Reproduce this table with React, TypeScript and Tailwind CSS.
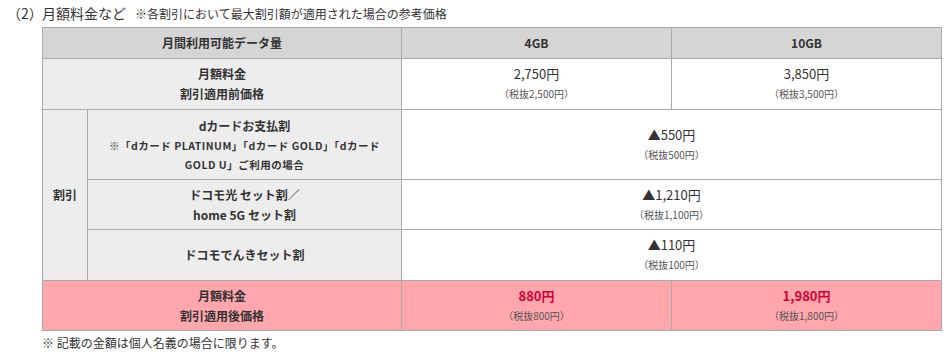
import React from "react";

const font = { fontFamily: '"Noto Sans CJK JP", "Noto Sans", sans-serif' };

function Price({ main, sub, red }: { main: string; sub: string; red?: boolean }) {
  return (
    <div className="flex flex-col items-center">
      <span className={red ? "text-[13px] leading-[20px] font-bold text-[#d50037]" : "text-[13px] leading-[20px] text-[#333]"}>{main}</span>
      <span className="text-[10px] leading-[20px] text-[#555]">{sub}</span>
    </div>
  );
}

export default function App() {
  const b = "border border-[#aaaaaa]";
  return (
    <div className="w-[948px] h-[357px] bg-white text-[#333]" style={font}>
      <div className="flex items-baseline h-[27px] pt-[3px]">
        <span className="ml-[7px] text-[14px] w-[35px]">（2）</span>
        <span className="text-[14px]">月額料金など</span>
        <span className="ml-[9px] text-[12px]">※各割引において最大割引額が適用された場合の参考価格</span>
      </div>
      <table className="ml-[42px] w-[900px] table-fixed border-collapse text-center">
        <colgroup>
          <col className="w-[45px]" />
          <col className="w-[314px]" />
          <col className="w-[270px]" />
          <col className="w-[270px]" />
        </colgroup>
        <tbody>
          <tr className="h-[31px] bg-[#d5d5d5]">
            <th colSpan={2} className={`${b} text-[12px] font-bold`}>月間利用可能データ量</th>
            <th className={`${b} text-[12px] font-bold`}>4GB</th>
            <th className={`${b} text-[12px] font-bold`}>10GB</th>
          </tr>
          <tr className="h-[51px]">
            <th colSpan={2} className={`${b} bg-[#ededed] text-[12px] leading-[20px] font-bold`}>月額料金<br />割引適用前価格</th>
            <td className={b}><Price main="2,750円" sub="（税抜2,500円）" /></td>
            <td className={b}><Price main="3,850円" sub="（税抜3,500円）" /></td>
          </tr>
          <tr className="h-[70px]">
            <th rowSpan={3} className={`${b} bg-[#ededed] text-[12px] font-bold`}>割引</th>
            <th className={`${b} bg-[#ededed] font-bold`}>
              <div className="text-[12px] leading-[20px]">dカードお支払割</div>
              <div className="text-[10.5px] leading-[19px] tracking-[0.5px] whitespace-nowrap">※「dカード PLATINUM」「dカード GOLD」「dカード<br />GOLD U」ご利用の場合</div>
            </th>
            <td colSpan={2} className={b}><Price main="▲550円" sub="（税抜500円）" /></td>
          </tr>
          <tr className="h-[50px]">
            <th className={`${b} bg-[#ededed] text-[12px] leading-[20px] font-bold`}>ドコモ光 セット割／<br />home 5G セット割</th>
            <td colSpan={2} className={b}><Price main="▲1,210円" sub="（税抜1,100円）" /></td>
          </tr>
          <tr className="h-[51px]">
            <th className={`${b} bg-[#ededed] text-[12px] font-bold`}>ドコモでんきセット割</th>
            <td colSpan={2} className={b}><Price main="▲110円" sub="（税抜100円）" /></td>
          </tr>
          <tr className="h-[50px] bg-[#ffa7ad]">
            <th colSpan={2} className={`${b} text-[12px] leading-[20px] font-bold`}>月額料金<br />割引適用後価格</th>
            <td className={b}><Price main="880円" sub="（税抜800円）" red /></td>
            <td className={b}><Price main="1,980円" sub="（税抜1,800円）" red /></td>
          </tr>
        </tbody>
      </table>
      <div className="ml-[42px] mt-[2px] text-[12px] leading-[20px]">※ 記載の金額は個人名義の場合に限ります。</div>
    </div>
  );
}
